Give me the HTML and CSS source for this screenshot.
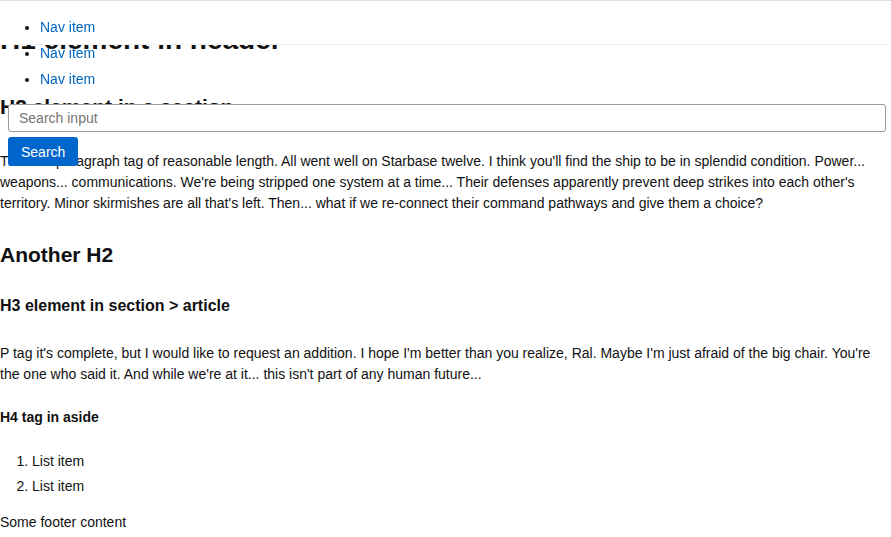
FILE: index.html
```html
<!DOCTYPE html>
<html lang="en">
<head>
    <meta charset="UTF-8">
    <meta name="viewport" content="width=device-width, initial-scale=1.0">
    <title>Element test page</title>
    <link rel="stylesheet" href="styles.css">
</head>
<body>
    <header class="site-header">
        <nav class="top-nav">
            <ul>
                <li><a href="#">Nav item</a></li>
                <li><a href="#">Nav item</a></li>
                <li><a href="#">Nav item</a></li>
            </ul>
        </nav>
        <h1>H1 element in header</h1>
    </header>

    <form class="search-form">
        <input type="text" placeholder="Search input">
        <button type="button">Search</button>
    </form>

    <main>
        <section class="intro">
            <h2>H2 element in a section</h2>
            <p>This is a paragraph tag of reasonable length. All went well on Starbase twelve. I think you'll find the ship to be in splendid condition. Power... weapons... communications. We're being stripped one system at a time... Their defenses apparently prevent deep strikes into each other's territory. Minor skirmishes are all that's left. Then... what if we re-connect their command pathways and give them a choice?</p>
        </section>

        <section>
            <h2>Another H2</h2>
            <article>
                <h3>H3 element in section &gt; article</h3>
                <p>P tag it's complete, but I would like to request an addition. I hope I'm better than you realize, Ral. Maybe I'm just afraid of the big chair. You're the one who said it. And while we're at it... this isn't part of any human future...</p>
            </article>
        </section>

        <aside>
            <h4>H4 tag in aside</h4>
            <ol>
                <li>List item</li>
                <li>List item</li>
            </ol>
        </aside>
    </main>

    <footer>Some footer content</footer>
</body>
</html>
```

FILE: styles.css
```css
* {
    box-sizing: border-box;
}
body {
    font-family: "Liberation Sans", Arial, sans-serif;
    font-size: 14px;
    line-height: 1.5;
    color: #111;
    background-color: #fff;
    margin: 0;
}
a {
    color: #0066c0;
    text-decoration: none;
}
.top-nav {
    position: fixed;
    top: 0;
    left: 0;
    right: 0;
    height: 45px;
    background-color: #fff;
    border-top: 1px solid #ddd;
    border-bottom: 1px solid #f2f2f2;
    z-index: 2;
}
.top-nav ul {
    margin: 13px 0 0;
    padding-left: 40px;
}
.top-nav li {
    line-height: 26px;
}
h1 {
    font-size: 28px;
    margin: 19px 0 30px;
}
h2 {
    font-size: 21px;
    margin: 25px 0 24px;
}
.intro h2 {
    margin-bottom: 28px;
}
h3 {
    font-size: 16px;
    margin: 20px 0 25px;
}
h4 {
    font-size: 14px;
    margin: 22px 0 23px;
}
p {
    margin: 14px 0;
}
.search-form {
    position: absolute;
    top: 104px;
    left: 8px;
    right: 5px;
    display: flex;
    flex-direction: column;
    align-items: flex-start;
    gap: 5px;
    z-index: 1;
}
.search-form input {
    width: 100%;
    height: 28px;
    padding: 0 10px;
    font-family: inherit;
    font-size: 14px;
    border: 1px solid #999;
    border-radius: 3px;
}
.search-form input::placeholder {
    color: #757575;
}
.search-form button {
    height: 29px;
    padding: 0 13px;
    font-family: inherit;
    font-size: 14px;
    background-color: #0066cc;
    color: #fff;
    border: none;
    border-radius: 3px;
}
ol {
    margin: 23px 0 15px;
    padding-left: 32px;
}
ol li {
    margin-bottom: 4px;
}
footer {
    margin: 0;
}
```
